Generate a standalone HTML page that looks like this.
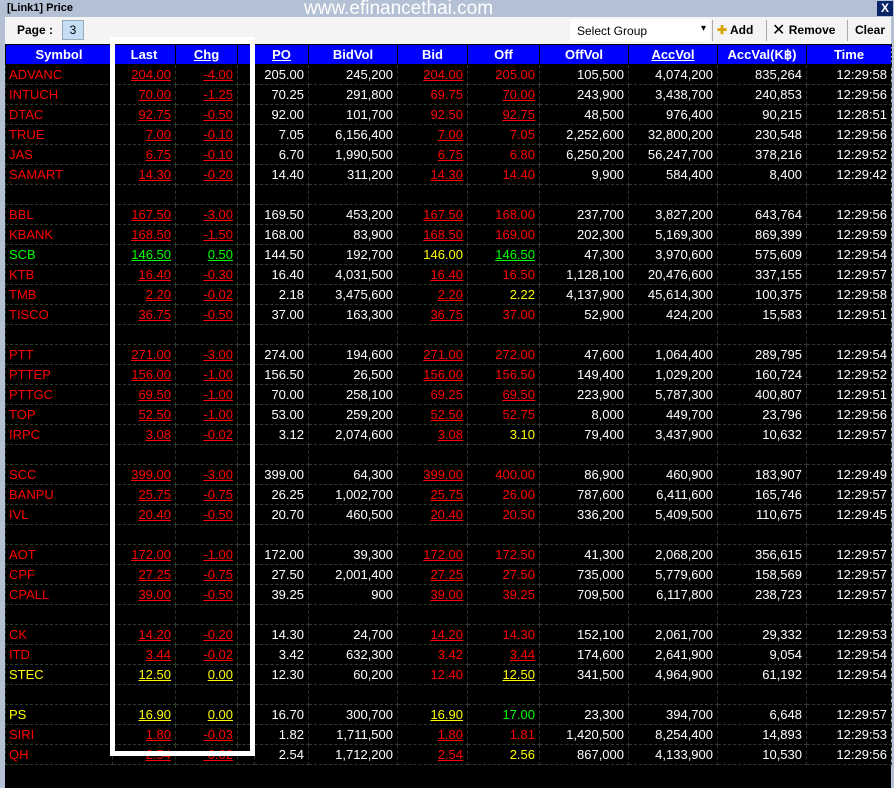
<!DOCTYPE html>
<html><head><meta charset="utf-8">
<style>
*{margin:0;padding:0;box-sizing:border-box}
body{width:894px;height:788px;background:#000;position:relative;overflow:hidden;font-family:"Liberation Sans",Arial,sans-serif}
#title{position:absolute;left:0;top:0;width:894px;height:17px;background:#b4c0d4}
#title .t{position:absolute;left:7px;top:2px;font-size:11px;font-weight:bold;color:#000}
#title .w{position:absolute;left:304px;top:-2px;font-size:19px;color:#fff}
#title .x{position:absolute;right:1px;top:1px;width:16px;height:15px;background:#0a246a;color:#fff;font-weight:bold;font-size:12px;text-align:center;line-height:15px}
#lb{position:absolute;left:0;top:17px;width:5px;height:771px;background:#b4c0d4}
#rb{position:absolute;right:0;top:17px;width:3px;height:771px;background:#b4c0d4}
#tb{position:absolute;left:5px;top:17px;width:886px;height:27px;background:#f4f4f4}
#tb .pg{position:absolute;left:12px;top:6px;font-size:12px;font-weight:bold}
#tb .n{position:absolute;left:57px;top:3px;width:22px;height:20px;background:#c4dcf4;border:1px solid #9ab;font-size:12px;text-align:center;line-height:18px}
#tb .sg{position:absolute;left:565px;top:2px;width:140px;height:22px;background:#fff;font-size:12px;padding:5px 7px}
#tb .sg:after{content:"▾";position:absolute;right:4px;top:4px;font-size:10px}
#tb .b{position:absolute;top:6px;font-size:12px;font-weight:bold;line-height:14px}
#tb .sep{position:absolute;top:3px;width:1px;height:21px;background:#aaa}
table{position:absolute;left:5px;top:44px;border-collapse:collapse;table-layout:fixed;font-size:13px}
td{height:20px;border:1px dashed #2c3a2c;text-align:right;padding:0 4px 0 0;color:#fff;white-space:nowrap;overflow:hidden}
td:first-child{text-align:left;padding-left:3px}
tr.h td{background:#0000ff;font-weight:bold;text-align:center;padding:0;border-color:#000}
tr.h td:first-child{text-align:center}
.r{color:#f00}.g{color:#0f0}.y{color:#ff0}.u{text-decoration:underline}
#frame{position:absolute;left:110px;top:37px;width:145px;height:719px;border:5px solid #fff;border-top:7px solid #fff}
</style></head><body>
<div id="title"><span class="t">[Link1] Price</span><span class="w">www.efinancethai.com</span><span class="x">X</span></div>
<div id="lb"></div><div id="rb"></div>
<div id="tb"><span class="pg">Page :</span><span class="n">3</span>
<div class="sg">Select Group</div>
<span class="sep" style="left:707px"></span>
<span class="b" style="left:712px"><span style="color:#d9a400">✚</span> Add</span>
<span class="sep" style="left:761px"></span>
<span class="b" style="left:767px"><span style="font-weight:normal;font-size:16px;vertical-align:-1px">✕</span> Remove</span>
<span class="sep" style="left:842px"></span>
<span class="b" style="left:850px">Clear</span></div>
<table>
<colgroup><col style="width:107px"><col style="width:63px"><col style="width:62px"><col style="width:17px"><col style="width:54px"><col style="width:89px"><col style="width:70px"><col style="width:72px"><col style="width:89px"><col style="width:89px"><col style="width:89px"><col style="width:85px"></colgroup>
<tr class="h"><td>Symbol</td><td>Last</td><td class="u">Chg</td><td></td><td class="u">PO</td><td>BidVol</td><td>Bid</td><td>Off</td><td>OffVol</td><td class="u">AccVol</td><td>AccVal(K฿)</td><td>Time</td></tr>
<tr><td class="r">ADVANC</td><td class="r u">204.00</td><td class="r u">-4.00</td><td></td><td>205.00</td><td>245,200</td><td class="r u">204.00</td><td class="r">205.00</td><td>105,500</td><td>4,074,200</td><td>835,264</td><td>12:29:58</td></tr>
<tr><td class="r">INTUCH</td><td class="r u">70.00</td><td class="r u">-1.25</td><td></td><td>70.25</td><td>291,800</td><td class="r">69.75</td><td class="r u">70.00</td><td>243,900</td><td>3,438,700</td><td>240,853</td><td>12:29:56</td></tr>
<tr><td class="r">DTAC</td><td class="r u">92.75</td><td class="r u">-0.50</td><td></td><td>92.00</td><td>101,700</td><td class="r">92.50</td><td class="r u">92.75</td><td>48,500</td><td>976,400</td><td>90,215</td><td>12:28:51</td></tr>
<tr><td class="r">TRUE</td><td class="r u">7.00</td><td class="r u">-0.10</td><td></td><td>7.05</td><td>6,156,400</td><td class="r u">7.00</td><td class="r">7.05</td><td>2,252,600</td><td>32,800,200</td><td>230,548</td><td>12:29:56</td></tr>
<tr><td class="r">JAS</td><td class="r u">6.75</td><td class="r u">-0.10</td><td></td><td>6.70</td><td>1,990,500</td><td class="r u">6.75</td><td class="r">6.80</td><td>6,250,200</td><td>56,247,700</td><td>378,216</td><td>12:29:52</td></tr>
<tr><td class="r">SAMART</td><td class="r u">14.30</td><td class="r u">-0.20</td><td></td><td>14.40</td><td>311,200</td><td class="r u">14.30</td><td class="r">14.40</td><td>9,900</td><td>584,400</td><td>8,400</td><td>12:29:42</td></tr>
<tr><td></td><td></td><td></td><td></td><td></td><td></td><td></td><td></td><td></td><td></td><td></td><td></td></tr>
<tr><td class="r">BBL</td><td class="r u">167.50</td><td class="r u">-3.00</td><td></td><td>169.50</td><td>453,200</td><td class="r u">167.50</td><td class="r">168.00</td><td>237,700</td><td>3,827,200</td><td>643,764</td><td>12:29:56</td></tr>
<tr><td class="r">KBANK</td><td class="r u">168.50</td><td class="r u">-1.50</td><td></td><td>168.00</td><td>83,900</td><td class="r u">168.50</td><td class="r">169.00</td><td>202,300</td><td>5,169,300</td><td>869,399</td><td>12:29:59</td></tr>
<tr><td class="g">SCB</td><td class="g u">146.50</td><td class="g u">0.50</td><td></td><td>144.50</td><td>192,700</td><td class="y">146.00</td><td class="g u">146.50</td><td>47,300</td><td>3,970,600</td><td>575,609</td><td>12:29:54</td></tr>
<tr><td class="r">KTB</td><td class="r u">16.40</td><td class="r u">-0.30</td><td></td><td>16.40</td><td>4,031,500</td><td class="r u">16.40</td><td class="r">16.50</td><td>1,128,100</td><td>20,476,600</td><td>337,155</td><td>12:29:57</td></tr>
<tr><td class="r">TMB</td><td class="r u">2.20</td><td class="r u">-0.02</td><td></td><td>2.18</td><td>3,475,600</td><td class="r u">2.20</td><td class="y">2.22</td><td>4,137,900</td><td>45,614,300</td><td>100,375</td><td>12:29:58</td></tr>
<tr><td class="r">TISCO</td><td class="r u">36.75</td><td class="r u">-0.50</td><td></td><td>37.00</td><td>163,300</td><td class="r u">36.75</td><td class="r">37.00</td><td>52,900</td><td>424,200</td><td>15,583</td><td>12:29:51</td></tr>
<tr><td></td><td></td><td></td><td></td><td></td><td></td><td></td><td></td><td></td><td></td><td></td><td></td></tr>
<tr><td class="r">PTT</td><td class="r u">271.00</td><td class="r u">-3.00</td><td></td><td>274.00</td><td>194,600</td><td class="r u">271.00</td><td class="r">272.00</td><td>47,600</td><td>1,064,400</td><td>289,795</td><td>12:29:54</td></tr>
<tr><td class="r">PTTEP</td><td class="r u">156.00</td><td class="r u">-1.00</td><td></td><td>156.50</td><td>26,500</td><td class="r u">156.00</td><td class="r">156.50</td><td>149,400</td><td>1,029,200</td><td>160,724</td><td>12:29:52</td></tr>
<tr><td class="r">PTTGC</td><td class="r u">69.50</td><td class="r u">-1.00</td><td></td><td>70.00</td><td>258,100</td><td class="r">69.25</td><td class="r u">69.50</td><td>223,900</td><td>5,787,300</td><td>400,807</td><td>12:29:51</td></tr>
<tr><td class="r">TOP</td><td class="r u">52.50</td><td class="r u">-1.00</td><td></td><td>53.00</td><td>259,200</td><td class="r u">52.50</td><td class="r">52.75</td><td>8,000</td><td>449,700</td><td>23,796</td><td>12:29:56</td></tr>
<tr><td class="r">IRPC</td><td class="r u">3.08</td><td class="r u">-0.02</td><td></td><td>3.12</td><td>2,074,600</td><td class="r u">3.08</td><td class="y">3.10</td><td>79,400</td><td>3,437,900</td><td>10,632</td><td>12:29:57</td></tr>
<tr><td></td><td></td><td></td><td></td><td></td><td></td><td></td><td></td><td></td><td></td><td></td><td></td></tr>
<tr><td class="r">SCC</td><td class="r u">399.00</td><td class="r u">-3.00</td><td></td><td>399.00</td><td>64,300</td><td class="r u">399.00</td><td class="r">400.00</td><td>86,900</td><td>460,900</td><td>183,907</td><td>12:29:49</td></tr>
<tr><td class="r">BANPU</td><td class="r u">25.75</td><td class="r u">-0.75</td><td></td><td>26.25</td><td>1,002,700</td><td class="r u">25.75</td><td class="r">26.00</td><td>787,600</td><td>6,411,600</td><td>165,746</td><td>12:29:57</td></tr>
<tr><td class="r">IVL</td><td class="r u">20.40</td><td class="r u">-0.50</td><td></td><td>20.70</td><td>460,500</td><td class="r u">20.40</td><td class="r">20.50</td><td>336,200</td><td>5,409,500</td><td>110,675</td><td>12:29:45</td></tr>
<tr><td></td><td></td><td></td><td></td><td></td><td></td><td></td><td></td><td></td><td></td><td></td><td></td></tr>
<tr><td class="r">AOT</td><td class="r u">172.00</td><td class="r u">-1.00</td><td></td><td>172.00</td><td>39,300</td><td class="r u">172.00</td><td class="r">172.50</td><td>41,300</td><td>2,068,200</td><td>356,615</td><td>12:29:57</td></tr>
<tr><td class="r">CPF</td><td class="r u">27.25</td><td class="r u">-0.75</td><td></td><td>27.50</td><td>2,001,400</td><td class="r u">27.25</td><td class="r">27.50</td><td>735,000</td><td>5,779,600</td><td>158,569</td><td>12:29:57</td></tr>
<tr><td class="r">CPALL</td><td class="r u">39.00</td><td class="r u">-0.50</td><td></td><td>39.25</td><td>900</td><td class="r u">39.00</td><td class="r">39.25</td><td>709,500</td><td>6,117,800</td><td>238,723</td><td>12:29:57</td></tr>
<tr><td></td><td></td><td></td><td></td><td></td><td></td><td></td><td></td><td></td><td></td><td></td><td></td></tr>
<tr><td class="r">CK</td><td class="r u">14.20</td><td class="r u">-0.20</td><td></td><td>14.30</td><td>24,700</td><td class="r u">14.20</td><td class="r">14.30</td><td>152,100</td><td>2,061,700</td><td>29,332</td><td>12:29:53</td></tr>
<tr><td class="r">ITD</td><td class="r u">3.44</td><td class="r u">-0.02</td><td></td><td>3.42</td><td>632,300</td><td class="r">3.42</td><td class="r u">3.44</td><td>174,600</td><td>2,641,900</td><td>9,054</td><td>12:29:54</td></tr>
<tr><td class="y">STEC</td><td class="y u">12.50</td><td class="y u">0.00</td><td></td><td>12.30</td><td>60,200</td><td class="r">12.40</td><td class="y u">12.50</td><td>341,500</td><td>4,964,900</td><td>61,192</td><td>12:29:54</td></tr>
<tr><td></td><td></td><td></td><td></td><td></td><td></td><td></td><td></td><td></td><td></td><td></td><td></td></tr>
<tr><td class="y">PS</td><td class="y u">16.90</td><td class="y u">0.00</td><td></td><td>16.70</td><td>300,700</td><td class="y u">16.90</td><td class="g">17.00</td><td>23,300</td><td>394,700</td><td>6,648</td><td>12:29:57</td></tr>
<tr><td class="r">SIRI</td><td class="r u">1.80</td><td class="r u">-0.03</td><td></td><td>1.82</td><td>1,711,500</td><td class="r u">1.80</td><td class="r">1.81</td><td>1,420,500</td><td>8,254,400</td><td>14,893</td><td>12:29:53</td></tr>
<tr><td class="r">QH</td><td class="r u">2.54</td><td class="r u">-0.02</td><td></td><td>2.54</td><td>1,712,200</td><td class="r u">2.54</td><td class="y">2.56</td><td>867,000</td><td>4,133,900</td><td>10,530</td><td>12:29:56</td></tr>
</table>
<div id="frame"></div>
</body></html>
